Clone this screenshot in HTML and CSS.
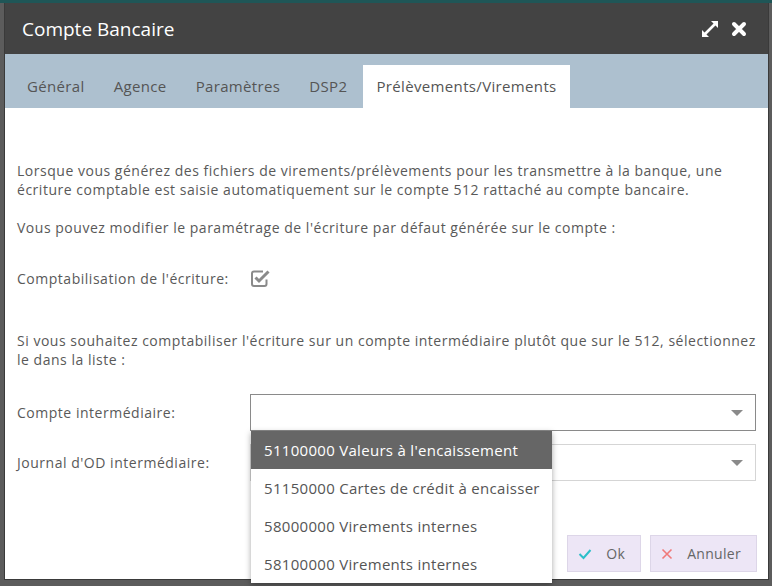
FILE: index.html
```html
<!DOCTYPE html>
<html lang="fr">
<head>
    <meta charset="UTF-8">
    <title>Compte Bancaire</title>
    <link rel="stylesheet" href="styles.css">
</head>
<body>
    <div class="dialog">
        <div class="dialog-header">
            <span class="dialog-title">Compte Bancaire</span>
            <div class="header-tools">
                <svg class="tool" width="18" height="18" viewBox="0 0 18 18">
                    <path d="M4 14 L14 4" stroke="#fff" stroke-width="2.6"/>
                    <path d="M10 1 L17 1 L17 8 Z" fill="#fff"/>
                    <path d="M1 10 L1 17 L8 17 Z" fill="#fff"/>
                </svg>
                <svg class="tool" width="16" height="16" viewBox="0 0 16 16">
                    <path d="M3 3 L13 13 M13 3 L3 13" stroke="#fff" stroke-width="4" stroke-linecap="round"/>
                </svg>
            </div>
        </div>

        <div class="tabs">
            <div class="tab">Général</div>
            <div class="tab">Agence</div>
            <div class="tab">Paramètres</div>
            <div class="tab">DSP2</div>
            <div class="tab active">Prélèvements/Virements</div>
        </div>

        <div class="dialog-body">
            <p class="intro">Lorsque vous générez des fichiers de virements/prélèvements pour les transmettre à la banque, une écriture comptable est saisie automatiquement sur le compte 512 rattaché au compte bancaire.</p>
            <p class="intro">Vous pouvez modifier le paramétrage de l'écriture par défaut générée sur le compte :</p>

            <div class="field check-field">
                <label>Comptabilisation de l'écriture:</label>
                <svg width="21" height="19" viewBox="0 0 21 19">
                    <path d="M13 2.5 H4 Q2 2.5 2 4.5 V15 Q2 17 4 17 H14.5 Q16.5 17 16.5 15 V10.5" fill="none" stroke="#8a8a8a" stroke-width="2"/>
                    <path d="M5.5 8.5 L9 12 L18.5 2.5" fill="none" stroke="#8a8a8a" stroke-width="3"/>
                </svg>
            </div>

            <p class="intro hint">Si vous souhaitez comptabiliser l'écriture sur un compte intermédiaire plutôt que sur le 512, sélectionnez le dans la liste :</p>

            <div class="field select-field">
                <label>Compte intermédiaire:</label>
                <div class="select open">
                    <span class="caret"></span>
                    <ul class="dropdown">
                        <li class="selected">51100000 Valeurs à l'encaissement</li>
                        <li>51150000 Cartes de crédit à encaisser</li>
                        <li>58000000 Virements internes</li>
                        <li>58100000 Virements internes</li>
                    </ul>
                </div>
            </div>

            <div class="field select-field second">
                <label>Journal d'OD intermédiaire:</label>
                <div class="select light">
                    <span class="caret"></span>
                </div>
            </div>

            <div class="actions">
                <button class="btn">
                    <svg width="14" height="12" viewBox="0 0 14 12"><path d="M1.5 6 L5.5 10 L12.5 2" fill="none" stroke="#2cbfc9" stroke-width="2"/></svg>
                    Ok
                </button>
                <button class="btn">
                    <svg width="12" height="12" viewBox="0 0 12 12"><path d="M1.5 1.5 L10.5 10.5 M10.5 1.5 L1.5 10.5" stroke="#f07a7a" stroke-width="1.6"/></svg>
                    Annuler
                </button>
            </div>
        </div>
    </div>
</body>
</html>
```

FILE: styles.css
```css
body {
    margin: 0;
    background-color: #5c5c5c;
    border-top: 3px solid #1f5657;
    font-family: "Open Sans", Arial, sans-serif;
    color: #595959;
    height: 583px;
    overflow: hidden;
}
.dialog {
    margin-left: 4px;
    width: 763px;
    height: 576px;
    border: 1px solid #3a3a3a;
    border-top: none;
    background-color: #ffffff;
    display: flex;
    flex-direction: column;
}
.dialog-header {
    background-color: #434343;
    height: 51px;
    display: flex;
    align-items: center;
    justify-content: space-between;
    padding: 0 21px 0 17px;
}
.dialog-title {
    color: #ffffff;
    font-size: 19px;
}
.header-tools {
    display: flex;
    align-items: center;
    gap: 12px;
}
.tabs {
    background-color: #adc0cf;
    height: 54px;
    display: flex;
    align-items: flex-end;
    gap: 3px;
    padding-left: 9px;
}
.tab {
    height: 43px;
    line-height: 43px;
    padding: 0 13px;
    font-size: 15px;
    letter-spacing: 0.35px;
    color: #555;
}
.tab.active {
    background-color: #ffffff;
}
.dialog-body {
    flex: 1;
    padding: 53px 11px 0 12px;
    font-size: 14px;
    letter-spacing: 0.52px;
    line-height: 19px;
}
.intro {
    margin: 0 0 19px 0;
}
.field {
    display: flex;
    align-items: center;
}
.field label {
    width: 233px;
    flex-shrink: 0;
}
.check-field {
    height: 20px;
    margin-top: 31px;
    margin-bottom: 43px;
}
.hint {
    margin-bottom: 25px;
}
.select {
    position: relative;
    width: 504px;
    height: 35px;
    border: 1px solid #8a8a8a;
}
.select.light {
    border-color: #d5d5d5;
}
.second {
    margin-top: 13px;
}
.caret {
    position: absolute;
    right: 12px;
    top: 15px;
    border-left: 6px solid transparent;
    border-right: 6px solid transparent;
    border-top: 6px solid #8a8a8a;
}
.dropdown {
    position: absolute;
    left: 0;
    top: 36px;
    width: 301px;
    margin: 0;
    padding: 0;
    list-style: none;
    background-color: #ffffff;
    box-shadow: 0 2px 6px rgba(0, 0, 0, 0.35);
    z-index: 2;
    font-size: 15px;
    letter-spacing: 0.3px;
}
.dropdown li {
    height: 38px;
    line-height: 38px;
    padding: 0 13px;
    color: #555;
    white-space: nowrap;
}
.dropdown li.selected {
    background-color: #666666;
    color: #ffffff;
}
.actions {
    display: flex;
    justify-content: flex-end;
    gap: 9px;
    margin-top: 54px;
}
.btn {
    height: 37px;
    padding: 0 15px 0 10px;
    background-color: #ede6f6;
    border: 1px solid #ddd6e8;
    font-family: "Open Sans", Arial, sans-serif;
    font-size: 14px;
    letter-spacing: 0.3px;
    color: #666;
    display: flex;
    align-items: center;
    gap: 14px;
}
```
